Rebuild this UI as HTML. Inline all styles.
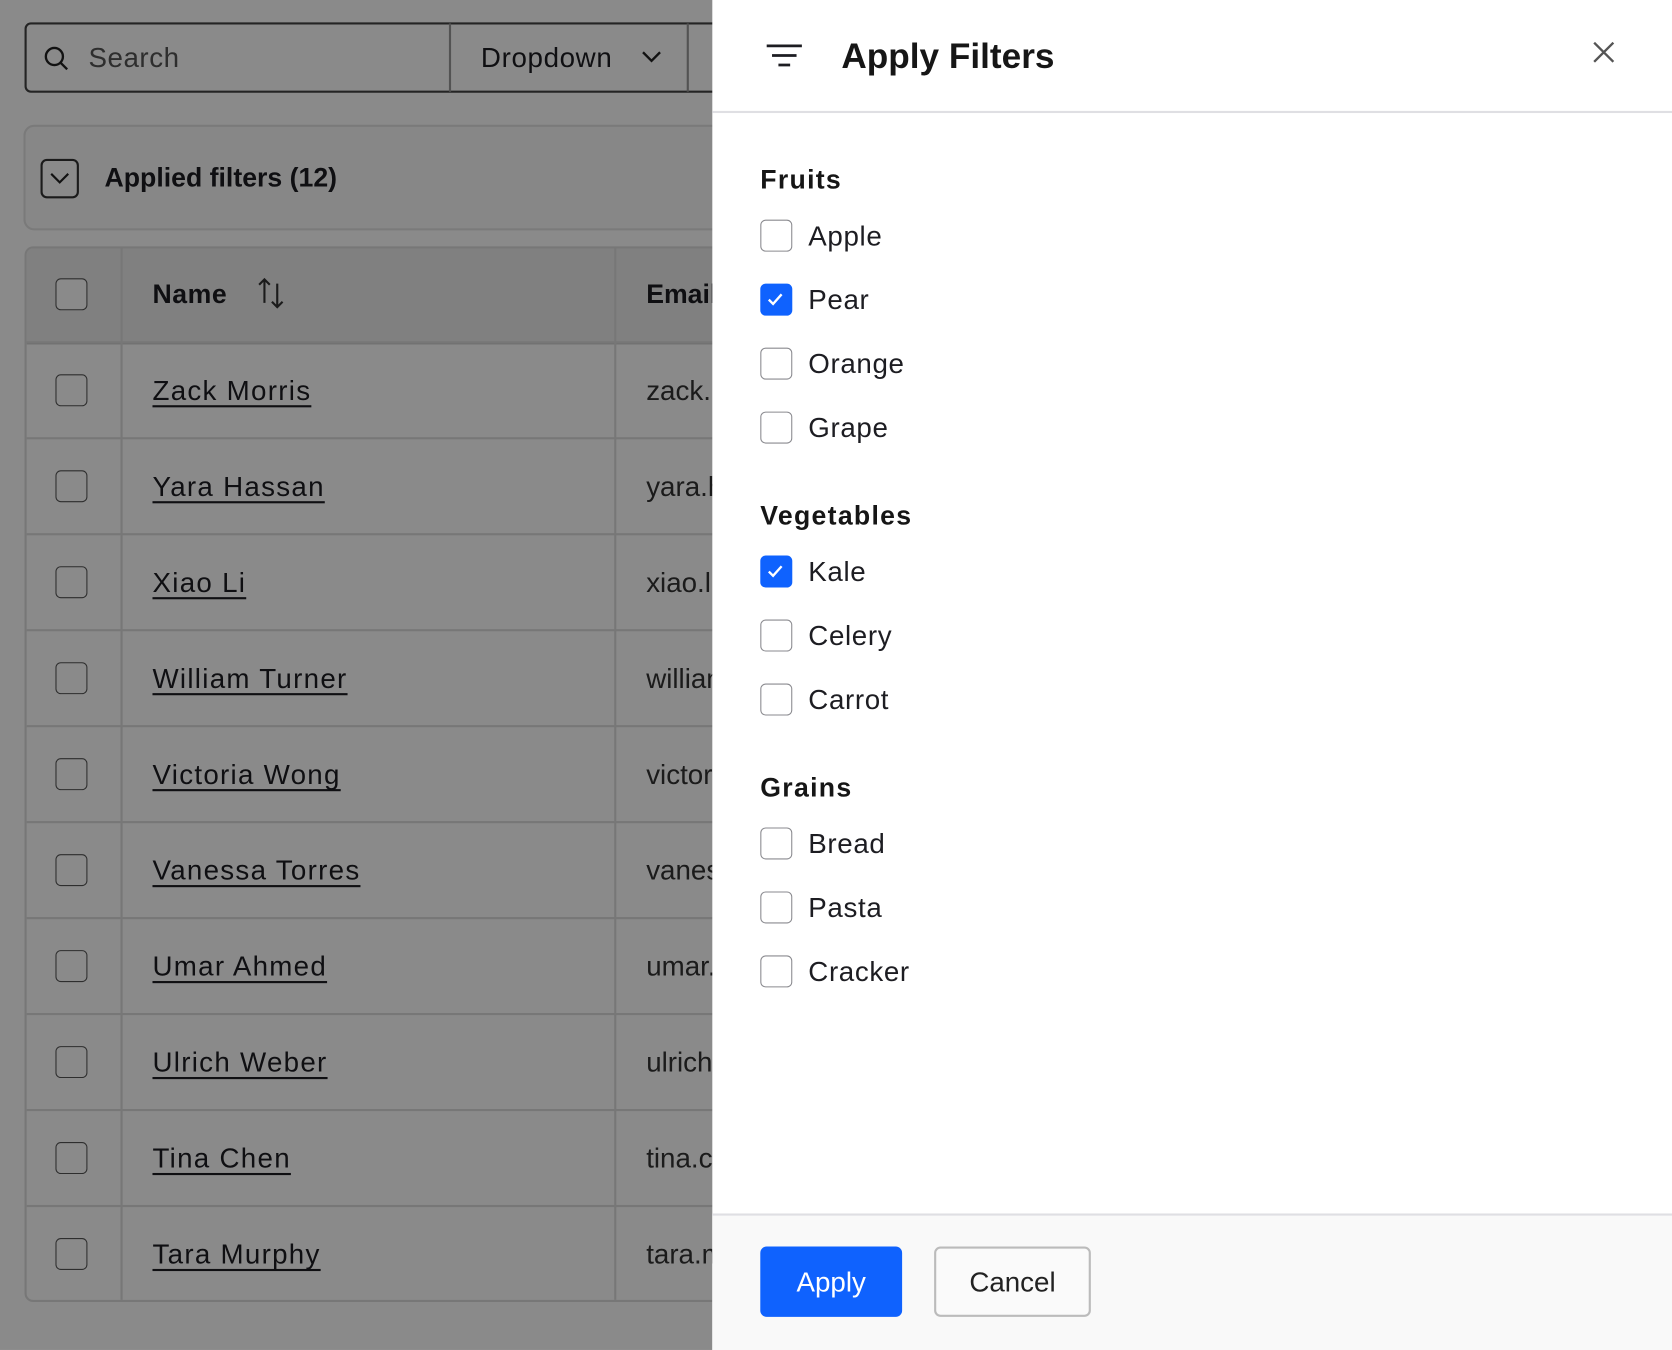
<!DOCTYPE html>
<html><head><meta charset="utf-8"><style>
html,body{margin:0;padding:0;width:1672px;height:1350px;overflow:hidden;background:#fff;font-family:"Liberation Sans",sans-serif;}
#s{position:absolute;left:0;top:0;width:1568px;height:1266px;transform:scale(1.06633);transform-origin:0 0;overflow:hidden;background:#fff;}
.a{position:absolute;}
.cb{position:absolute;width:28px;height:28px;border:1.5px solid #8a8a8f;border-radius:5px;box-sizing:border-box;background:#fff;}
.tx{position:absolute;font-size:26px;color:#1d1d22;line-height:30px;}
.nm{text-decoration:underline;text-underline-offset:5px;text-decoration-thickness:2px;letter-spacing:1.2px;}
.on{background:#0f62fe;border-color:#0f62fe;}
</style></head><body><div id="s">
<div class="a" style="left:23px;top:21px;width:700px;height:66px;border:2px solid #444;border-radius:6px;box-sizing:border-box;background:#fff"></div>
<div class="a" style="left:421px;top:22px;width:2px;height:64px;background:#999"></div>
<div class="a" style="left:644px;top:22px;width:2px;height:64px;background:#999"></div>
<svg class="a" style="left:40px;top:42px" width="26" height="26" viewBox="0 0 26 26"><circle cx="11" cy="11" r="8" fill="none" stroke="#222" stroke-width="2.2"/><path d="M17 17l6 6" stroke="#222" stroke-width="2.2"/></svg>
<div class="tx" style="left:83px;top:39px;color:#555;letter-spacing:0.5px">Search</div>
<div class="tx" style="left:451px;top:39px;letter-spacing:0.6px">Dropdown</div>
<svg class="a" style="left:600px;top:45px" width="22" height="16"><path d="M3 4l8 8 8-8" fill="none" stroke="#222" stroke-width="2.2"/></svg>
<div class="a" style="left:22px;top:117px;width:800px;height:99px;border:2px solid #e2e2e2;border-radius:10px;box-sizing:border-box;background:#fafafa"></div>
<div class="a" style="left:38px;top:149px;width:36px;height:37px;border:2px solid #333;border-radius:6px;box-sizing:border-box;background:#fff"></div>
<svg class="a" style="left:45px;top:158px" width="22" height="18"><path d="M3 5l8 8 8-8" fill="none" stroke="#222" stroke-width="2"/></svg>
<div class="tx" style="left:98px;top:152px;font-weight:bold;font-size:25px">Applied filters (12)</div>
<div class="a" style="left:23px;top:231px;width:800px;height:990px;border:2px solid #ddd;border-radius:8px;box-sizing:border-box;background:#fff;overflow:hidden">
 <div class="a" style="left:0;top:0;width:800px;height:88px;background:#ececec;border-bottom:2px solid #ccc"></div>
</div>
<div class="a" style="left:113px;top:233px;width:2px;height:986px;background:#ddd"></div>
<div class="a" style="left:576px;top:233px;width:2px;height:986px;background:#ddd"></div>
<div class="cb" style="left:52px;top:261px;border-color:#555;width:30px;height:30px"></div>
<div class="tx" style="left:143px;top:261px;font-weight:bold;font-size:25px;letter-spacing:0.5px">Name</div>
<svg class="a" style="left:240px;top:258px" width="30" height="34"><path d="M8 26V4M3 9l5-5 5 5M20 8v22M15 25l5 5 5-5" fill="none" stroke="#333" stroke-width="2"/></svg>
<div class="tx" style="left:606px;top:261px;font-weight:bold;font-size:25px">Email</div>
<div id="rows"></div>
<script>
var n=["Zack Morris","Yara Hassan","Xiao Li","William Turner","Victoria Wong","Vanessa Torres","Umar Ahmed","Ulrich Weber","Tina Chen","Tara Murphy"];
var e=["zack.morris","yara.hassan","xiao.li","william","victoria","vanessa","umar.ahmed","ulrich","tina.chen","tara.murphy"];
var h="";for(var i=0;i<10;i++){var y=320+i*90;
h+='<div class="a" style="left:25px;top:'+y+'px;width:800px;height:2px;background:#ddd"></div>';
h+='<div class="cb" style="left:52px;top:'+(y+31)+'px;border-color:#555;width:30px;height:30px"></div>';
h+='<div class="tx nm" style="left:143px;top:'+(y+31)+'px">'+n[i]+'</div>';
h+='<div class="tx" style="left:606px;top:'+(y+31)+'px;color:#333">'+e[i]+'</div>';}
document.getElementById("rows").innerHTML=h;
</script>
<div class="a" style="left:0;top:0;width:1568px;height:1266px;background:rgba(0,0,0,0.46)"></div>
<div class="a" style="left:668px;top:0;width:900px;height:1266px;background:#fff">
 <div class="a" style="left:0;top:104px;width:900px;height:2px;background:#dfdfe3"></div>
 <svg class="a" style="left:50px;top:40px" width="36" height="26"><path d="M1 3h33M6 12h23M12 21h11" stroke="#1d1d22" stroke-width="2.6"/></svg>
 <div class="tx" style="left:121px;top:33px;font-size:33px;line-height:40px;font-weight:bold;color:#161616">Apply Filters</div>
 <svg class="a" style="left:825px;top:38px" width="22" height="22"><path d="M2 2l18 18M20 2L2 20" stroke="#555" stroke-width="2.2"/></svg>
 <div class="a" style="left:0;top:1138px;width:900px;height:128px;background:#f9f9f9;border-top:2px solid #dfdfe3"></div>
 <div class="a" style="left:45px;top:1169px;width:133px;height:66px;background:#0f62fe;border-radius:6px;color:#fff;font-size:26px;line-height:66px;text-align:center">Apply</div>
 <div class="a" style="left:208px;top:1169px;width:147px;height:66px;background:#fafafa;border:2px solid #bbb;box-sizing:border-box;border-radius:6px;color:#222;font-size:26px;line-height:62px;text-align:center">Cancel</div>
 <div id="fl"></div>
</div>
<script>
var it=[["h","Fruits",169],["c","Apple",221],["x","Pear",281],["c","Orange",341],["c","Grape",401],["h","Vegetables",484],["x","Kale",536],["c","Celery",596],["c","Carrot",656],["h","Grains",739],["c","Bread",791],["c","Pasta",851],["c","Cracker",911]];
var g="";it.forEach(function(t){
if(t[0]=="h")g+='<div class="tx" style="left:45px;top:'+(t[2]-15)+'px;font-weight:bold;font-size:25px;color:#161616;letter-spacing:1.2px">'+t[1]+'</div>';
else{g+='<div class="cb'+(t[0]=="x"?" on":"")+'" style="left:45px;top:'+(t[2]-15)+'px;width:30px;height:30px">'+(t[0]=="x"?'<svg width="27" height="27" style="position:absolute;left:0;top:0"><path d="M7 14l4 4 8-9" fill="none" stroke="#fff" stroke-width="2.2"/></svg>':'')+'</div>';
g+='<div class="tx" style="left:90px;top:'+(t[2]-15)+'px;letter-spacing:0.6px">'+t[1]+'</div>';}});
document.getElementById("fl").innerHTML=g;
</script>
</div></body></html>
